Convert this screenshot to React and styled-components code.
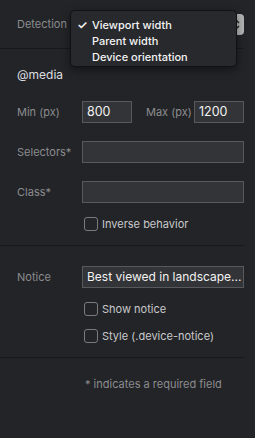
import React from "react";
import styled, { createGlobalStyle } from "styled-components";

const GlobalStyle = createGlobalStyle`
  html, body {
    margin: 0;
    padding: 0;
    background: #232427;
  }
  body {
    font-family: Inter, "Noto Sans", "Liberation Sans", sans-serif;
    -webkit-font-smoothing: antialiased;
  }
`;

const Page = styled.div`
  position: relative;
  width: 255px;
  height: 438px;
  background: #232427;
  overflow: hidden;
`;

const Panel = styled.div`
  width: 244px;
  display: flex;
  flex-direction: column;
`;

const Section = styled.div`
  display: flex;
  flex-direction: column;
  gap: ${(p) => p.$gap || 0}px;
  padding: ${(p) => p.$pt || 0}px 0 ${(p) => p.$pb || 0}px 17px;
  border-bottom: ${(p) => (p.$last ? "none" : "1px solid #18191b")};
  height: ${(p) => (p.$h ? `${p.$h}px` : "auto")};
  box-sizing: border-box;
  justify-content: ${(p) => (p.$center ? "center" : "flex-start")};
`;

const Row = styled.div`
  display: flex;
  align-items: center;
  height: ${(p) => p.$h || 22}px;
  margin-bottom: ${(p) => p.$mb || 0}px;
`;

const Label = styled.div`
  width: ${(p) => p.$w || 65}px;
  padding-left: ${(p) => p.$pl || 0}px;
  flex: none;
  font-size: 11px;
  color: #8b8c8f;
  white-space: nowrap;
`;

const Heading = styled.div`
  font-size: 12px;
  line-height: 16px;
  color: #dedfe0;
`;

const Input = styled.div`
  box-sizing: border-box;
  height: 22px;
  width: ${(p) => (p.$w ? `${p.$w}px` : "auto")};
  flex: ${(p) => (p.$w ? "none" : "1")};
  min-width: 0;
  background: #333437;
  border: 1px solid #58595c;
  padding: 0 3px 0 4px;
  font-size: ${(p) => p.$fs || 12.5}px;
  line-height: 20px;
  color: #f2f2f2;
  white-space: nowrap;
  overflow: hidden;
`;

const Select = styled.div`
  height: 21px;
  flex: 1;
  display: flex;
  justify-content: flex-end;
`;

const SelectCap = styled.div`
  width: 14px;
  height: 21px;
  background: #b3b4b6;
  border-radius: 0 4px 4px 0;
  display: flex;
  align-items: center;
  justify-content: center;
`;

const CheckRow = styled.label`
  display: flex;
  align-items: center;
  gap: 4px;
  height: 14px;
  margin-left: 67px;
  font-size: 11px;
  color: #c9cacc;
`;

const Box = styled.span`
  box-sizing: border-box;
  width: 14px;
  height: 14px;
  border: 1px solid #7a7b7e;
  border-radius: 3px;
`;

const Footnote = styled.div`
  margin-left: 68px;
  font-size: 11px;
  line-height: 14px;
  color: #8b8c8f;
`;

const Menu = styled.div`
  position: absolute;
  left: 70px;
  top: 10px;
  width: 167px;
  height: 57px;
  box-sizing: border-box;
  padding-top: 7px;
  background: #28292c;
  border: 1px solid #111214;
  border-radius: 5px;
  box-shadow: 0 3px 8px rgba(0, 0, 0, 0.45);
`;

const MenuItem = styled.div`
  position: relative;
  height: 16px;
  line-height: 14px;
  padding-left: 21px;
  font-size: 11px;
  font-weight: 500;
  color: #f4f4f5;
`;

const Tick = styled.span`
  position: absolute;
  left: 6px;
  top: 0;
  font-size: 12px;
  font-weight: 600;
`;

function Check({ label }) {
  return (
    <CheckRow>
      <Box />
      {label}
    </CheckRow>
  );
}

export default function App() {
  return (
    <Page>
      <GlobalStyle />
      <Panel>
        <Section $h={49} $center>
          <Row $h={21}>
            <Label>Detection</Label>
            <Select>
              <SelectCap>
                <svg width="6" height="11" viewBox="0 0 6 11">
                  <path d="M1 4 L3 2 L5 4 M1 7 L3 9 L5 7" fill="none" stroke="#222" strokeWidth="1.3" />
                </svg>
              </SelectCap>
            </Select>
          </Row>
        </Section>

        <Section $pt={18} $pb={14} $gap={18}>
          <Heading>@media</Heading>
          <Row>
            <Label>Min (px)</Label>
            <Input $w={50}>800</Input>
            <Label $w={48} $pl={14}>Max (px)</Label>
            <Input $w={50}>1200</Input>
          </Row>
          <Row>
            <Label>Selectors*</Label>
            <Input />
          </Row>
          <Row $mb={-4}>
            <Label>Class*</Label>
            <Input />
          </Row>
          <Check label="Inverse behavior" />
        </Section>

        <Section $pt={20} $pb={14} $gap={13}>
          <Row $mb={1}>
            <Label>Notice</Label>
            <Input $fs={12}>Best viewed in landscape...</Input>
          </Row>
          <Check label="Show notice" />
          <Check label="Style (.device-notice)" />
        </Section>

        <Section $pt={19} $last>
          <Footnote>* indicates a required field</Footnote>
        </Section>
      </Panel>

      <Menu>
        <MenuItem>
          <Tick>✓</Tick>Viewport width
        </MenuItem>
        <MenuItem>Parent width</MenuItem>
        <MenuItem>Device orientation</MenuItem>
      </Menu>
    </Page>
  );
}
